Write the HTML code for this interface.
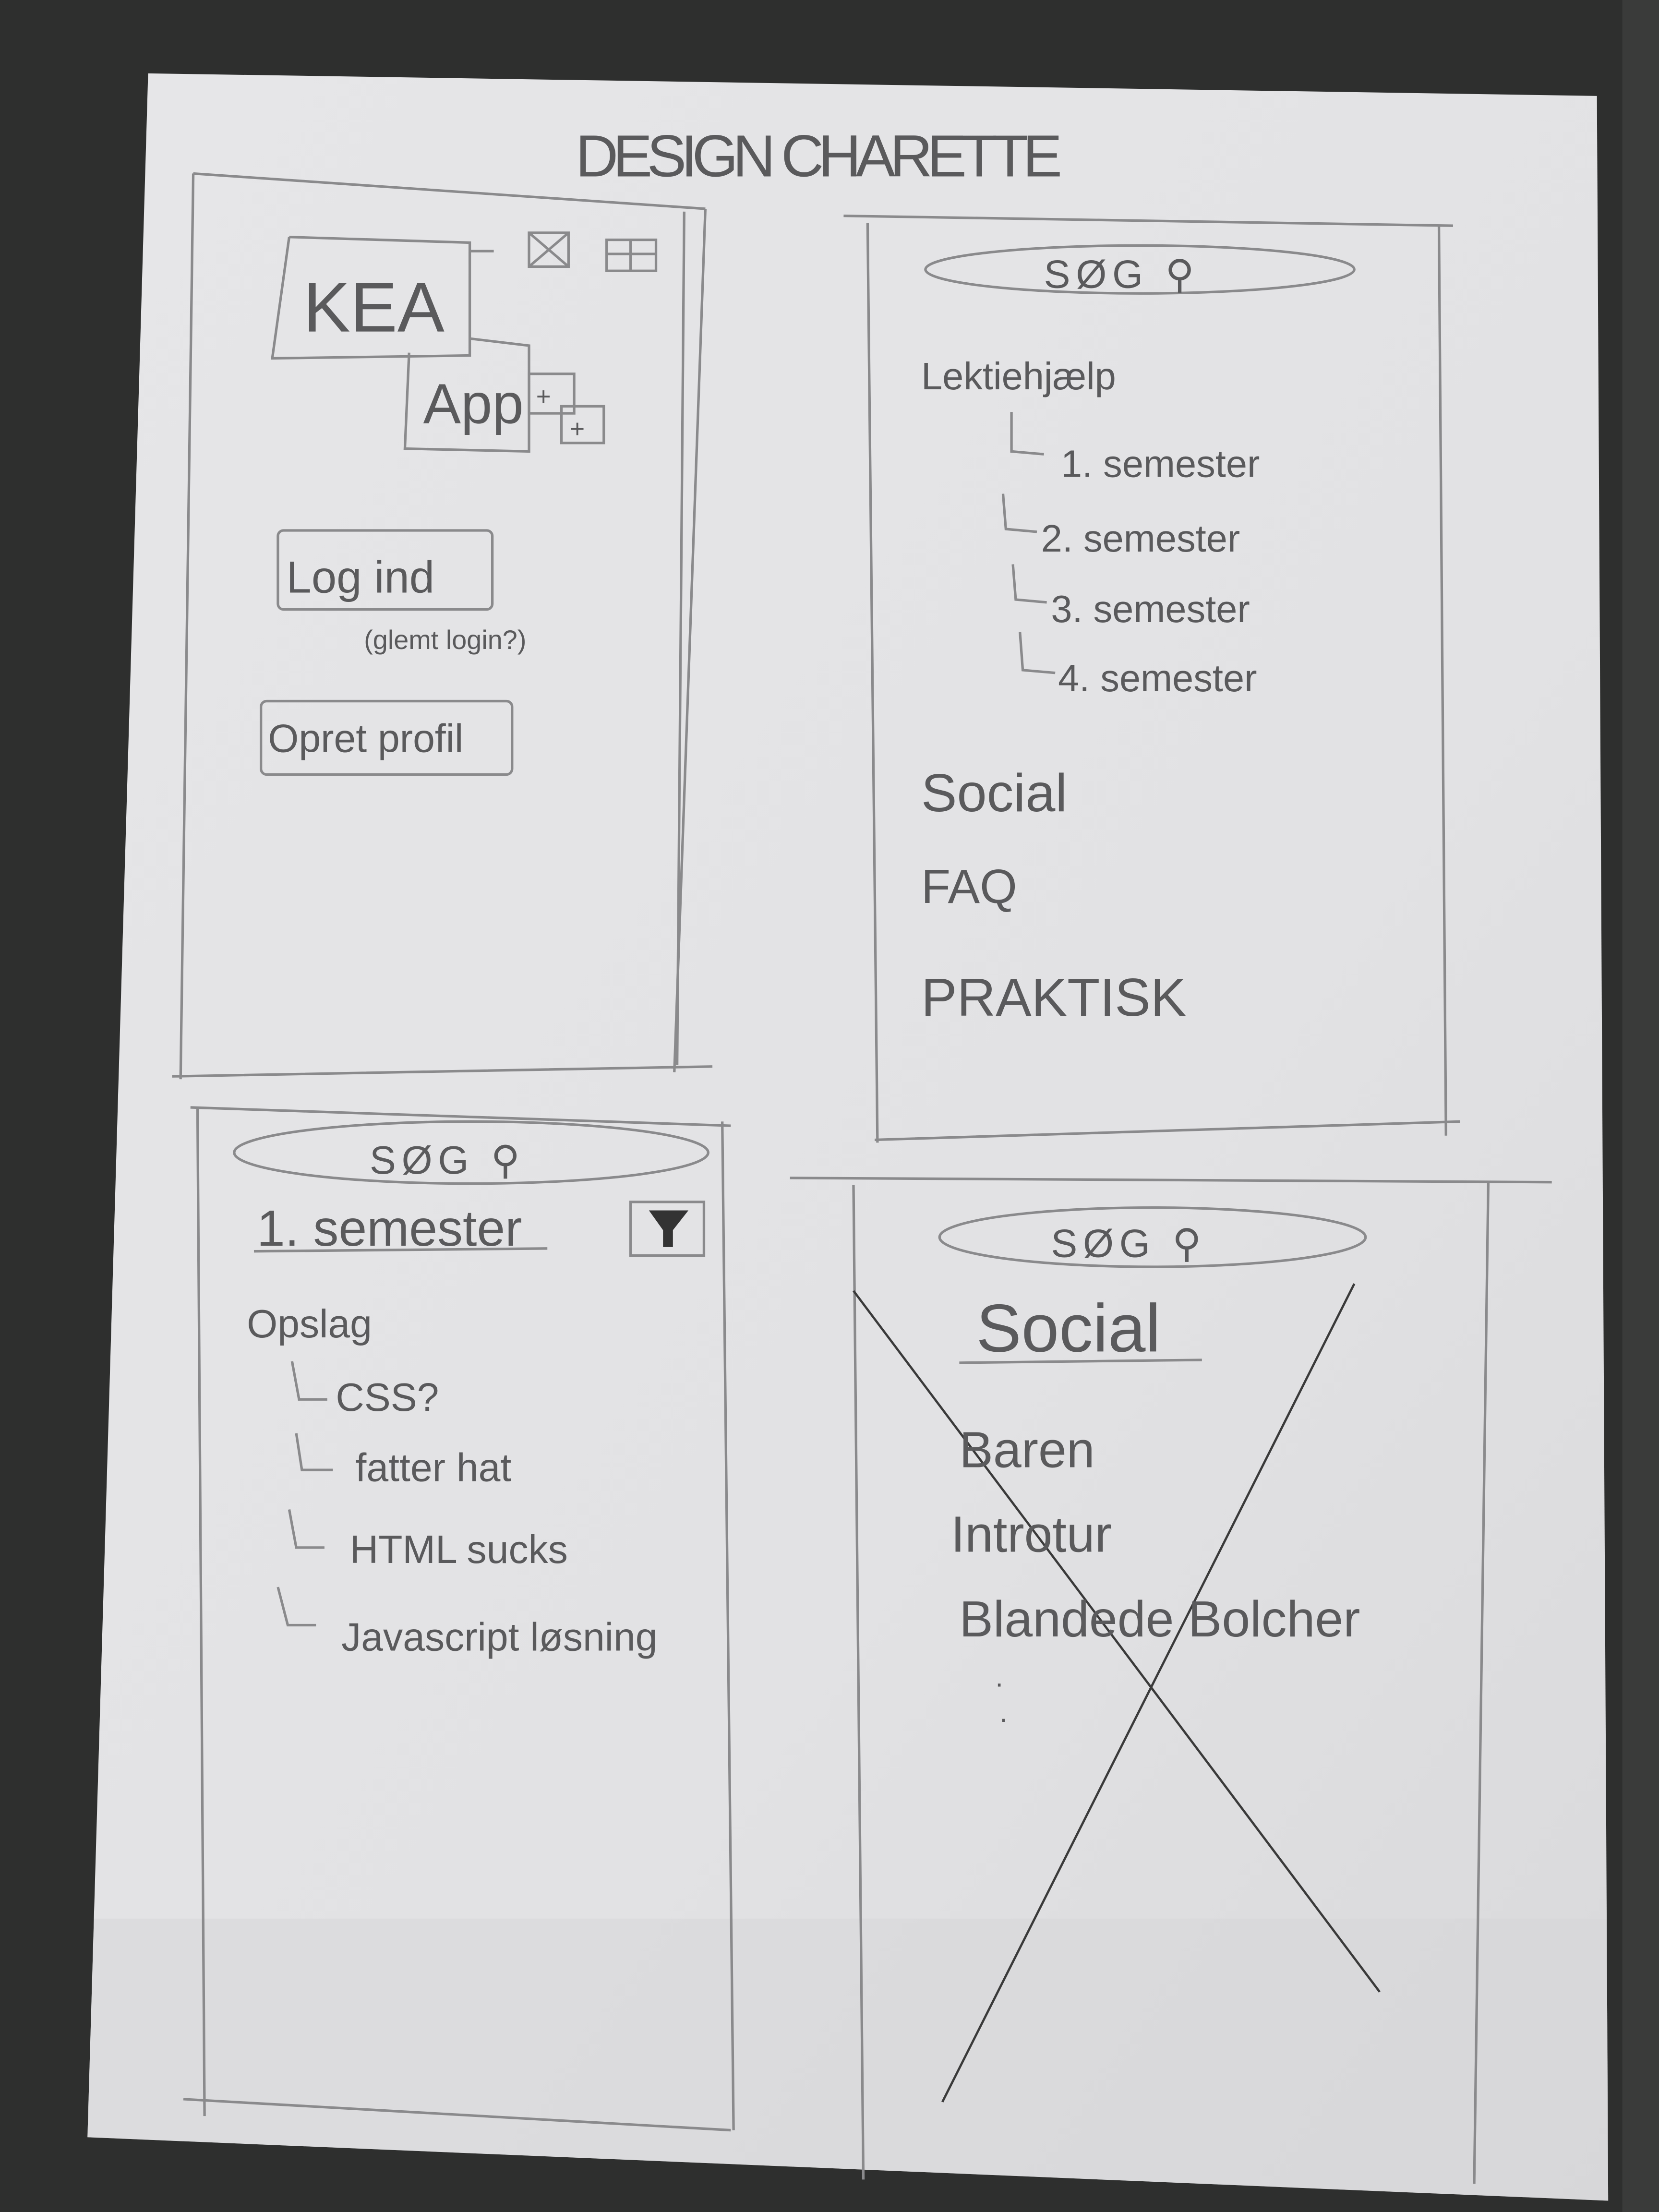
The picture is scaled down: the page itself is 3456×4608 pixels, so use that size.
<!DOCTYPE html>
<html><head><meta charset="utf-8"><style>
html,body{margin:0;padding:0;background:#2e2f2e;}
svg{display:block;}
text{font-family:"Liberation Sans",sans-serif;fill:#5a5a5c;}
</style></head><body>
<svg width="3456" height="4608" viewBox="0 0 1176 1568" xmlns="http://www.w3.org/2000/svg">
<defs>
<linearGradient id="pg" x1="0" y1="0" x2="1" y2="1">
<stop offset="0" stop-color="#e6e6e8"/><stop offset="0.6" stop-color="#e2e2e4"/><stop offset="1" stop-color="#d9d9db"/>
</linearGradient>
<clipPath id="cp"><polygon points="105,52 1132,68 1140,1560 62,1515"/></clipPath>
</defs>
<rect width="1176" height="1568" fill="#2e2f2e"/>
<rect x="1150" y="0" width="26" height="1568" fill="#3a3b3a"/>
<polygon points="105,52 1132,68 1140,1560 62,1515" fill="url(#pg)"/>
<rect x="62" y="1360" width="1078" height="200" fill="#d6d6d8" opacity="0.5" clip-path="url(#cp)"/>
<g stroke="#8a8a8c" stroke-width="1.8" fill="none">
<path d="M137,123 L500,148 M137,123 L128,765 M500,148 L478,760 M122,763 L505,756 M485,150 L480,755"/>
<path d="M598,153 L1030,160 M615,158 L622,810 M1020,160 L1025,805 M620,808 L1035,795"/>
<path d="M135,785 L518,798 M140,785 L145,1500 M512,795 L520,1510 M130,1488 L518,1510"/>
<path d="M560,835 L1100,838 M605,840 L612,1545 M1055,838 L1045,1548"/>
<path d="M205,168 L333,172 L333,252 L193,254 L205,168 M333,178 L350,178"/>
<path d="M290,250 L287,318 L375,320 L375,245 L333,240"/>
<rect x="375" y="265" width="32" height="28"/><rect x="398" y="288" width="30" height="26"/>
<rect x="375" y="165" width="28" height="24"/><path d="M375,165 L403,189 M403,165 L375,189"/>
<rect x="430" y="170" width="35" height="22"/><path d="M430,180 L465,180 M447,170 L447,192"/>
<rect x="197" y="376" width="152" height="56" rx="4"/><rect x="185" y="497" width="178" height="52" rx="4"/>
<ellipse cx="808" cy="191" rx="152" ry="17"/><ellipse cx="334" cy="817" rx="168" ry="22"/><ellipse cx="817" cy="877" rx="151" ry="21"/>
<path d="M180,887 L388,885 M680,966 L852,964"/>
<rect x="447" y="852" width="52" height="38"/>
<path d="M717,292 L717,320 L740,322 M711,350 L713,375 L735,377 M718,400 L720,425 L742,427 M723,448 L725,475 L748,477"/>
<path d="M207,965 L212,992 L232,992 M210,1016 L214,1042 L236,1042 M205,1070 L210,1097 L230,1097 M197,1125 L204,1152 L224,1152"/>
</g>
<path d="M460,858 L488,858 L477,872 L477,884 L470,884 L470,872 Z" fill="#333"/>
<g stroke="#3a3a3a" stroke-width="1.6"><path d="M605,915 L978,1412 M960,910 L668,1490"/></g>
<text x="408" y="125" font-size="42" textLength="345">DESIGN CHARETTE</text>
<text x="215" y="235" font-size="50">KEA</text>
<text x="300" y="300" font-size="40">App</text>
<text x="380" y="287" font-size="18">+</text><text x="404" y="310" font-size="18">+</text>
<text x="203" y="420" font-size="32">Log  ind</text>
<text x="258" y="460" font-size="19">(glemt login?)</text>
<text x="190" y="533" font-size="28">Opret profil</text>
<text x="740" y="204" font-size="28" letter-spacing="4">SØG ⚲</text>
<text x="262" y="832" font-size="28" letter-spacing="4">SØG ⚲</text>
<text x="745" y="891" font-size="28" letter-spacing="4">SØG ⚲</text>
<text x="653" y="276" font-size="27">Lektiehjælp</text>
<text x="752" y="338" font-size="27">1. semester</text>
<text x="738" y="391" font-size="27">2. semester</text>
<text x="745" y="441" font-size="27">3. semester</text>
<text x="750" y="490" font-size="27">4. semester</text>
<text x="653" y="575" font-size="38">Social</text>
<text x="653" y="640" font-size="34">FAQ</text>
<text x="653" y="720" font-size="38">PRAKTISK</text>
<text x="182" y="883" font-size="36">1. semester</text>
<text x="175" y="948" font-size="28">Opslag</text>
<text x="238" y="1000" font-size="28">CSS?</text>
<text x="252" y="1050" font-size="28">fatter hat</text>
<text x="248" y="1108" font-size="28">HTML sucks</text>
<text x="242" y="1170" font-size="28">Javascript løsning</text>
<text x="692" y="958" font-size="48">Social</text>
<text x="680" y="1040" font-size="36">Baren</text>
<text x="674" y="1100" font-size="36">Introtur</text>
<text x="680" y="1160" font-size="36">Blandede Bolcher</text>
<text x="705" y="1200" font-size="20">·</text><text x="708" y="1225" font-size="20">·</text>
</svg>
</body></html>
